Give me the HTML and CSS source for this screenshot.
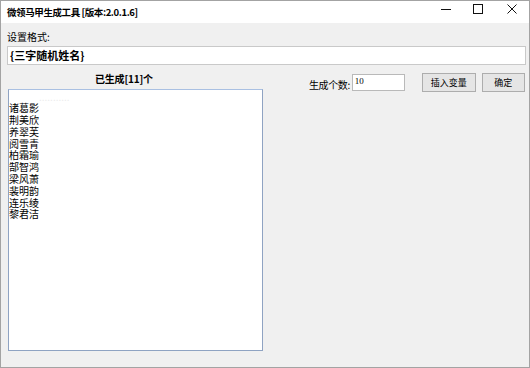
FILE: index.html
```html
<!DOCTYPE html>
<html lang="zh-CN">

<head>
    <meta charset="UTF-8">
    <title>微领马甲生成工具</title>
    <link rel="stylesheet" href="styles.css">
</head>

<body>
    <div class="window">
        <!-- Title bar -->
        <div class="title-bar">
            <div class="title">微领马甲生成工具 [版本:2.0.1.6]</div>
            <div class="win-controls">
                <span class="win-btn min">
                    <svg width="10" height="10" viewBox="0 0 10 10"><path d="M0 5.5h10" stroke="#111" stroke-width="1"/></svg>
                </span>
                <span class="win-btn max">
                    <svg width="10" height="10" viewBox="0 0 10 10"><rect x="0.5" y="0.5" width="9" height="9" fill="none" stroke="#111" stroke-width="1"/></svg>
                </span>
                <span class="win-btn close">
                    <svg width="10" height="10" viewBox="0 0 10 10"><path d="M0.5 0.5l9 9M9.5 0.5l-9 9" stroke="#111" stroke-width="1"/></svg>
                </span>
            </div>
        </div>

        <!-- Body -->
        <div class="content">
            <div class="format-label">设置格式:</div>
            <div class="format-input">{三字随机姓名}</div>

            <div class="main-row">
                <div class="result-panel">
                    <div class="result-title">已生成[11]个</div>
                    <div class="result-list">
                        <div class="ghost">...........</div>
                        <div>诸葛影</div>
                        <div>荆美欣</div>
                        <div>养翠芙</div>
                        <div>阅雪青</div>
                        <div>柏霜瑜</div>
                        <div>郜智鸿</div>
                        <div>梁风萧</div>
                        <div>裴明韵</div>
                        <div>连乐绫</div>
                        <div>黎君洁</div>
                    </div>
                </div>

                <div class="controls">
                    <span class="count-label">生成个数:</span>
                    <div class="count-input">10</div>
                    <button class="btn btn-insert">插入变量</button>
                    <button class="btn btn-ok">确定</button>
                </div>
            </div>
        </div>
    </div>
</body>

</html>
```

FILE: styles.css
```css
body {
    margin: 0;
    font-family: "Noto Sans CJK SC", "Liberation Sans", sans-serif;
    color: #000;
}

.window {
    width: 530px;
    height: 368px;
    box-sizing: border-box;
    border: 1px solid #a3a3a3;
    display: flex;
    flex-direction: column;
    background-color: #f0f0f0;
}

.title-bar {
    height: 22px;
    background-color: #fff;
    display: flex;
    align-items: center;
    justify-content: space-between;
    padding-left: 6px;
}

.title {
    font-size: 9.5px;
    font-weight: bold;
    letter-spacing: -0.4px;
}

.win-controls {
    display: flex;
    align-items: center;
    height: 100%;
    padding-bottom: 6px;
    box-sizing: border-box;
}

.win-btn {
    display: flex;
    width: 10px;
    height: 10px;
}

.win-btn.min {
    margin-right: 22px;
}

.win-btn.max {
    margin-right: 24px;
}

.win-btn.close {
    margin-right: 12px;
}

.content {
    flex: 1;
    padding: 0 3px 0 6px;
}

.format-label {
    font-size: 10px;
    line-height: 14px;
    margin-top: 7px;
}

.format-input {
    margin-top: 2px;
    height: 19px;
    box-sizing: border-box;
    border: 1px solid #c9c9c9;
    background-color: #fff;
    font-size: 11px;
    font-weight: bold;
    line-height: 17px;
    padding-left: 2px;
}

.main-row {
    display: flex;
    margin-top: 7px;
}

.result-panel {
    width: 255px;
    flex-shrink: 0;
    margin-left: 1px;
}

.result-title {
    font-size: 10px;
    font-weight: bold;
    line-height: 14px;
    letter-spacing: -0.2px;
    padding-left: 87px;
}

.result-list {
    margin-top: 3px;
    height: 262px;
    box-sizing: border-box;
    border: 1px solid #8fa3c2;
    border-top-color: #a9c0e2;
    background-color: #fff;
    font-size: 10px;
    line-height: 11.8px;
    padding-top: 0.5px;
}

.result-list .ghost {
    color: #ececec;
    padding-left: 30px;
}

.controls {
    display: flex;
    align-items: center;
    margin-left: 46px;
    margin-top: 1px;
    height: 19px;
    white-space: nowrap;
}

.count-label {
    font-size: 10px;
    letter-spacing: -0.4px;
    margin-top: 4px;
    flex-shrink: 0;
}

.count-input {
    width: 53px;
    height: 17px;
    flex-shrink: 0;
    box-sizing: border-box;
    margin-left: 2px;
    border: 1px solid #b9b9b9;
    background-color: #fff;
    font-family: "Liberation Serif", serif;
    font-size: 9px;
    line-height: 13px;
    padding-left: 2px;
}

.btn {
    height: 19px;
    flex-shrink: 0;
    box-sizing: border-box;
    border: 1px solid #adadad;
    background-color: #e5e5e5;
    font-family: "Noto Sans CJK SC", sans-serif;
    font-size: 9px;
    padding: 0;
}

.btn-insert {
    width: 54px;
    margin-left: 17px;
}

.btn-ok {
    width: 43px;
    margin-left: 6px;
}
```
